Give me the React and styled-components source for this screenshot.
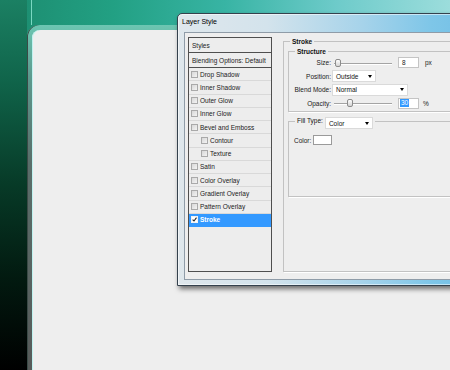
import styled, { createGlobalStyle } from "styled-components";

const GlobalStyle = createGlobalStyle`
  html, body {
    margin: 0;
    padding: 0;
  }
  body {
    width: 450px;
    height: 370px;
    overflow: hidden;
    background: #eeeeee;
    font-family: "Liberation Sans", Arial, sans-serif;
    color: #1a1a1a;
  }
`;

const Desktop = styled.div`
  position: relative;
  display: flex;
  width: 450px;
  height: 370px;
  overflow: hidden;
  background: linear-gradient(90deg, #1c8b6e 0%, #22a083 25%, #38b4a4 50%, #6ecbca 75%, #9cdddc 100%);
`;

const SideStrip = styled.div`
  width: 27px;
  flex-shrink: 0;
  background: linear-gradient(180deg, #1b8063 0%, #10644a 22%, #073a27 50%, #021a10 75%, #000 100%);
`;

const Stage = styled.div`
  flex: 1;
  display: flex;
  flex-direction: column;
`;

const TopBand = styled.div`
  height: 25px;
  margin-left: 4px;
  border-left: 1px solid #7ad8c2;
`;

const PanelFrame = styled.div`
  flex: 1;
  display: flex;
  padding: 5px 0 0 5px;
  border-top-left-radius: 12px;
  box-shadow: inset 1px 0 0 #3a4a46;
  background: linear-gradient(180deg, #6cc6b2 0%, #5c9a8e 15%, #5a6e6a 40%, #575b5a 100%);
`;

const PanelFace = styled.div`
  flex: 1;
  background: #eeeeee;
  border-top-left-radius: 8px;
  box-shadow: inset 1px 0 0 #bff3f0;
`;

const Window = styled.div`
  position: absolute;
  left: 177px;
  top: 13px;
  width: 300px;
  height: 273px;
  box-sizing: border-box;
  display: flex;
  flex-direction: column;
  border: 1px solid #34414d;
  border-radius: 5px 5px 0 0;
  background: linear-gradient(90deg, #dfe7ec 0%, #d3e3ec 30%, #a6d3ea 62%, #7ec6e8 85%, #72bfe6 100%);
  box-shadow: inset 0 0 0 1px rgba(255, 255, 255, 0.55), 2px 3px 5px rgba(0, 0, 0, 0.55);
`;

const TitleBar = styled.div`
  height: 18px;
  box-sizing: border-box;
  padding: 0 0 3px 4px;
  display: flex;
  align-items: center;
  font-size: 7px;
  color: #000;
`;

const Client = styled.div`
  flex: 1;
  display: flex;
  margin: 0 5px 5px 6px;
  padding: 4px 0 7px 3px;
  background: #eeeeee;
  border: 1px solid #8f9ca8;
`;

const StyleList = styled.ul`
  list-style: none;
  margin: 0;
  padding: 0;
  width: 84px;
  flex-shrink: 0;
  box-sizing: border-box;
  border: 1px solid #4f4f4f;
  background: #ededed;
  display: flex;
  flex-direction: column;
  font-size: 6.5px;
`;

const ListHead = styled.li`
  height: 15px;
  box-sizing: border-box;
  padding-left: 3px;
  border-bottom: 1px solid #4f4f4f;
  display: flex;
  align-items: center;
`;

const ListItem = styled.li`
  height: 13.25px;
  box-sizing: border-box;
  padding-left: ${(p) => (p.$sub ? "12px" : "2px")};
  border-bottom: 1px solid ${(p) => (p.$selected ? "#3399ff" : "#d9d9d9")};
  display: flex;
  align-items: center;
  gap: 2px;
  background: ${(p) => (p.$selected ? "#3399ff" : "transparent")};
  color: ${(p) => (p.$selected ? "#fff" : "#1a1a1a")};
  font-weight: ${(p) => (p.$selected ? "bold" : "normal")};
`;

const Check = styled.span`
  width: 7px;
  height: 7px;
  box-sizing: border-box;
  display: flex;
  border: 1px solid ${(p) => (p.$on ? "#f2f2f2" : "#a9a9a9")};
  background: ${(p) => (p.$on ? "#fff" : "linear-gradient(135deg, #d8d8d8, #f3f3f3)")};
`;

const Group = styled.fieldset`
  margin: ${(p) => p.$margin || "0"};
  padding: ${(p) => p.$pad || "0"};
  min-width: 0;
  border: 1px solid #c2c2c2;
  box-shadow: 1px 1px 0 #fff;
  ${(p) => p.$grow && "flex: 1;"}
`;

const Legend = styled.legend`
  margin-left: ${(p) => p.$offset}px;
  padding: 0 2px;
  height: ${(p) => p.$h || 9}px;
  display: flex;
  align-items: ${(p) => (p.$top ? "flex-start" : "center")};
  gap: 2px;
  font-size: 6.5px;
  font-weight: ${(p) => (p.$plain ? "normal" : "bold")};
  color: #111;
`;

const FieldRow = styled.div`
  height: ${(p) => p.$h || 13.5}px;
  display: flex;
  align-items: center;
  font-size: 6.5px;
`;

const FieldLabel = styled.span`
  width: 42px;
  margin-right: 1px;
  text-align: right;
`;

const Slider = styled.div`
  position: relative;
  width: 60px;
  height: 10px;
  &::before {
    content: "";
    position: absolute;
    left: 2px;
    right: 0;
    top: 5px;
    height: 1px;
    background: #a4a4a4;
    box-shadow: 0 1px 0 #fff;
  }
`;

const Thumb = styled.span`
  position: absolute;
  top: 1px;
  width: 6px;
  height: 8px;
  box-sizing: border-box;
  border: 1px solid #8c8c8c;
  border-radius: 2px;
  background: linear-gradient(180deg, #fdfdfd, #d4d4d4);
`;

const NumBox = styled.span`
  width: 21px;
  height: 11px;
  box-sizing: border-box;
  margin-left: 6px;
  padding-left: ${(p) => (p.$sel ? "1px" : "3px")};
  display: flex;
  align-items: center;
  background: #fff;
  border: 1px solid #c4c4c4;
`;

const Selected = styled.span`
  background: #3399ff;
  color: #fff;
  padding: 0 1px;
  line-height: 8px;
`;

const Unit = styled.span`
  margin-left: ${(p) => p.$gap}px;
`;

const Select = styled.span`
  width: ${(p) => p.$w}px;
  height: 12px;
  box-sizing: border-box;
  padding: 0 3px;
  display: flex;
  align-items: center;
  justify-content: space-between;
  background: #fff;
  border: 1px solid #dadada;
  font-size: 6.5px;
  font-weight: normal;
  color: #111;
  flex-shrink: 0;
  &::after {
    content: "";
    border-left: 2.5px solid transparent;
    border-right: 2.5px solid transparent;
    border-top: 3px solid #000;
  }
`;

const Swatch = styled.span`
  width: 19px;
  height: 10px;
  box-sizing: border-box;
  margin-left: 2px;
  background: #fff;
  border: 1px solid #9a9a9a;
`;

const effects = [
  { name: "Drop Shadow" },
  { name: "Inner Shadow" },
  { name: "Outer Glow" },
  { name: "Inner Glow" },
  { name: "Bevel and Emboss" },
  { name: "Contour", sub: true },
  { name: "Texture", sub: true },
  { name: "Satin" },
  { name: "Color Overlay" },
  { name: "Gradient Overlay" },
  { name: "Pattern Overlay" },
  { name: "Stroke", on: true },
];

function SliderField({ value, max }) {
  return (
    <Slider>
      <Thumb style={{ left: 2 + (value / max) * 44 }} />
    </Slider>
  );
}

function App() {
  return (
    <>
      <GlobalStyle />
      <Desktop>
        <SideStrip />
        <Stage>
          <TopBand />
          <PanelFrame>
            <PanelFace />
          </PanelFrame>
        </Stage>

        <Window>
          <TitleBar>Layer Style</TitleBar>
          <Client>
            <StyleList>
              <ListHead>Styles</ListHead>
              <ListHead>Blending Options: Default</ListHead>
              {effects.map((fx) => (
                <ListItem key={fx.name} $sub={fx.sub} $selected={fx.on}>
                  <Check $on={fx.on}>
                    {fx.on && (
                      <svg width="5" height="5" viewBox="0 0 5 5">
                        <path d="M0.6 2.6 L2 4 L4.5 0.7" fill="none" stroke="#222" strokeWidth="1.1" />
                      </svg>
                    )}
                  </Check>
                  {fx.name}
                </ListItem>
              ))}
            </StyleList>

            <Group $grow $margin="0 0 0 11px" $pad="0 0 0 4px">
              <Legend $offset={2}>Stroke</Legend>
              <Group $margin="1px 0 0 0" $pad="0 0 1px 0">
                <Legend $offset={6}>Structure</Legend>
                <FieldRow>
                  <FieldLabel>Size:</FieldLabel>
                  <SliderField value={8} max={250} />
                  <NumBox>8</NumBox>
                  <Unit $gap={6}>px</Unit>
                </FieldRow>
                <FieldRow>
                  <FieldLabel>Position:</FieldLabel>
                  <Select $w={44}>Outside</Select>
                </FieldRow>
                <FieldRow>
                  <FieldLabel>Blend Mode:</FieldLabel>
                  <Select $w={76}>Normal</Select>
                </FieldRow>
                <FieldRow>
                  <FieldLabel>Opacity:</FieldLabel>
                  <SliderField value={30} max={100} />
                  <NumBox $sel>
                    <Selected>30</Selected>
                  </NumBox>
                  <Unit $gap={4}>%</Unit>
                </FieldRow>
              </Group>

              <Group $margin="5px 0 0 0" $pad="10px 0 51px 5px">
                <Legend $offset={1} $h={8} $top $plain>
                  Fill Type:
                  <Select $w={48}>Color</Select>
                </Legend>
                <FieldRow $h={10}>
                  Color:
                  <Swatch />
                </FieldRow>
              </Group>
            </Group>
          </Client>
        </Window>
      </Desktop>
    </>
  );
}

export default App;
